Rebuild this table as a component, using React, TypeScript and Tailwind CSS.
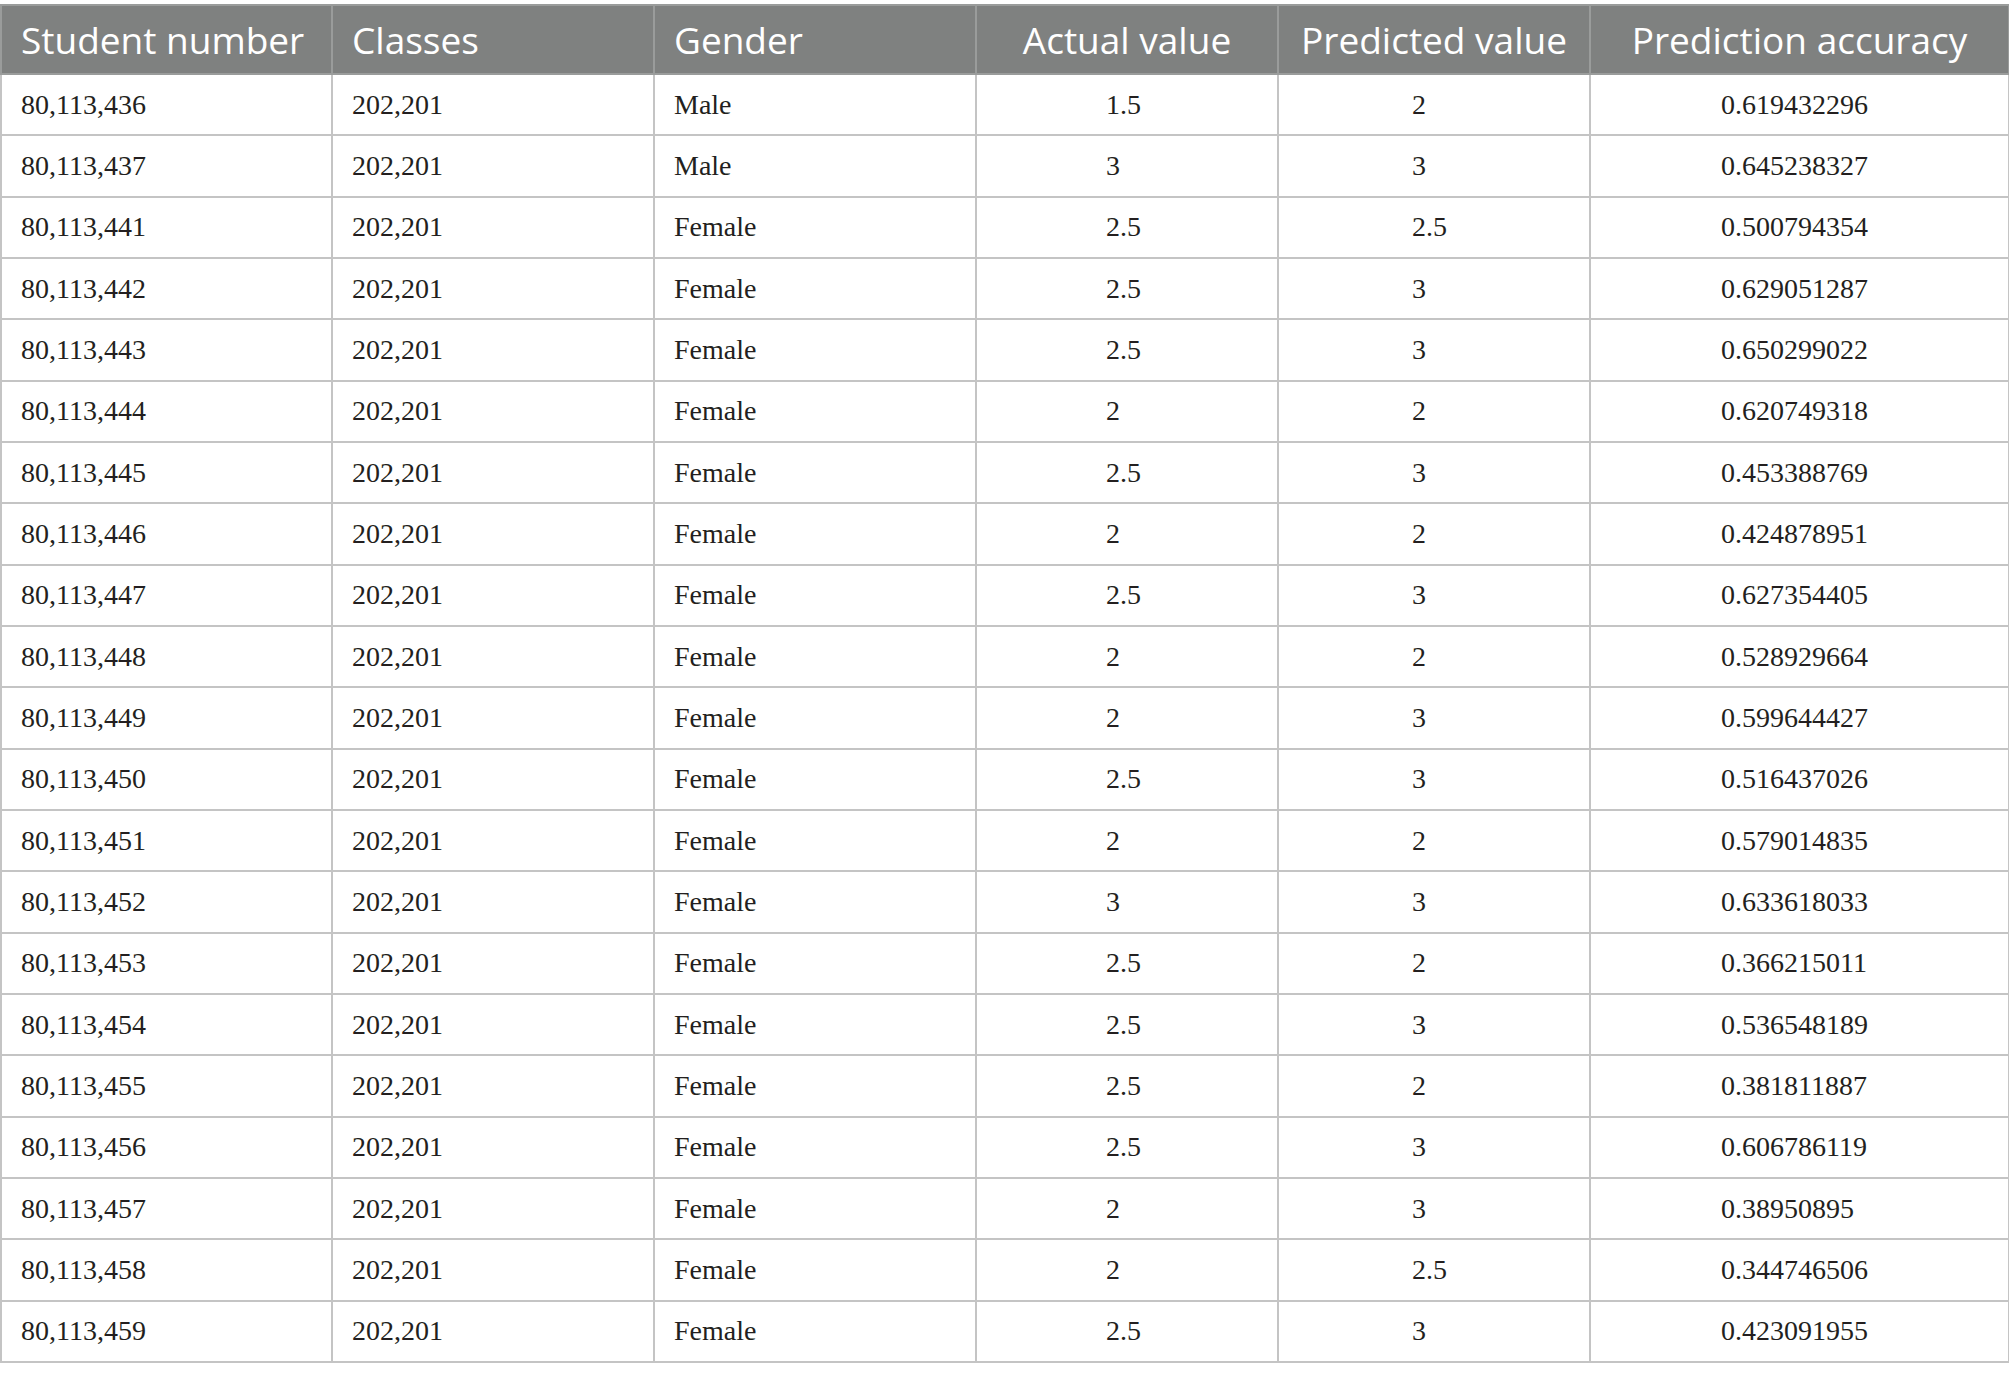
import React from "react";

const rows: [string, string, string, string, string, string][] = [
  ["80,113,436", "202,201", "Male", "1.5", "2", "0.619432296"],
  ["80,113,437", "202,201", "Male", "3", "3", "0.645238327"],
  ["80,113,441", "202,201", "Female", "2.5", "2.5", "0.500794354"],
  ["80,113,442", "202,201", "Female", "2.5", "3", "0.629051287"],
  ["80,113,443", "202,201", "Female", "2.5", "3", "0.650299022"],
  ["80,113,444", "202,201", "Female", "2", "2", "0.620749318"],
  ["80,113,445", "202,201", "Female", "2.5", "3", "0.453388769"],
  ["80,113,446", "202,201", "Female", "2", "2", "0.424878951"],
  ["80,113,447", "202,201", "Female", "2.5", "3", "0.627354405"],
  ["80,113,448", "202,201", "Female", "2", "2", "0.528929664"],
  ["80,113,449", "202,201", "Female", "2", "3", "0.599644427"],
  ["80,113,450", "202,201", "Female", "2.5", "3", "0.516437026"],
  ["80,113,451", "202,201", "Female", "2", "2", "0.579014835"],
  ["80,113,452", "202,201", "Female", "3", "3", "0.633618033"],
  ["80,113,453", "202,201", "Female", "2.5", "2", "0.366215011"],
  ["80,113,454", "202,201", "Female", "2.5", "3", "0.536548189"],
  ["80,113,455", "202,201", "Female", "2.5", "2", "0.381811887"],
  ["80,113,456", "202,201", "Female", "2.5", "3", "0.606786119"],
  ["80,113,457", "202,201", "Female", "2", "3", "0.38950895"],
  ["80,113,458", "202,201", "Female", "2", "2.5", "0.344746506"],
  ["80,113,459", "202,201", "Female", "2.5", "3", "0.423091955"],
];

const widths = ["w-[331px]", "w-[322px]", "w-[322px]", "w-[302px]", "w-[312px]", "w-[419px]"];

export default function App() {
  const serif = { fontFamily: '"Liberation Serif", "Times New Roman", serif' };
  const sans = { fontFamily: '"Open Sans", "Noto Sans", sans-serif' };
  return (
    <div className="bg-white w-[2009px] h-[1380px] pt-[4px]">
      <table className="border-collapse w-[2008px] table-fixed">
        <thead>
          <tr className="bg-[#7f8180] h-[69px] text-white text-[37px]" style={sans}>
            <th className={`${widths[0]} border-2 border-[#9a9c9b] font-normal text-left pl-[19px]`}>Student number</th>
            <th className={`${widths[1]} border-2 border-[#9a9c9b] font-normal text-left pl-[19px]`}>Classes</th>
            <th className={`${widths[2]} border-2 border-[#9a9c9b] font-normal text-left pl-[19px]`}>Gender</th>
            <th className={`${widths[3]} border-2 border-[#9a9c9b] font-normal text-center`}>Actual value</th>
            <th className={`${widths[4]} border-2 border-[#9a9c9b] font-normal text-center`}>Predicted value</th>
            <th className={`${widths[5]} border-2 border-[#9a9c9b] font-normal text-center`}>Prediction accuracy</th>
          </tr>
        </thead>
        <tbody className="text-[28px] text-[#231f20]" style={serif}>
          {rows.map((r) => (
            <tr key={r[0]} className="h-[61.33px]">
              <td className="border-2 border-[#c4c4c4] pl-[19px]">{r[0]}</td>
              <td className="border-2 border-[#c4c4c4] pl-[19px]">{r[1]}</td>
              <td className="border-2 border-[#c4c4c4] pl-[19px]">{r[2]}</td>
              <td className="border-2 border-[#c4c4c4] pl-[129px]">{r[3]}</td>
              <td className="border-2 border-[#c4c4c4] pl-[133px]">{r[4]}</td>
              <td className="border-2 border-[#c4c4c4] pl-[130px]">{r[5]}</td>
            </tr>
          ))}
        </tbody>
      </table>
    </div>
  );
}
